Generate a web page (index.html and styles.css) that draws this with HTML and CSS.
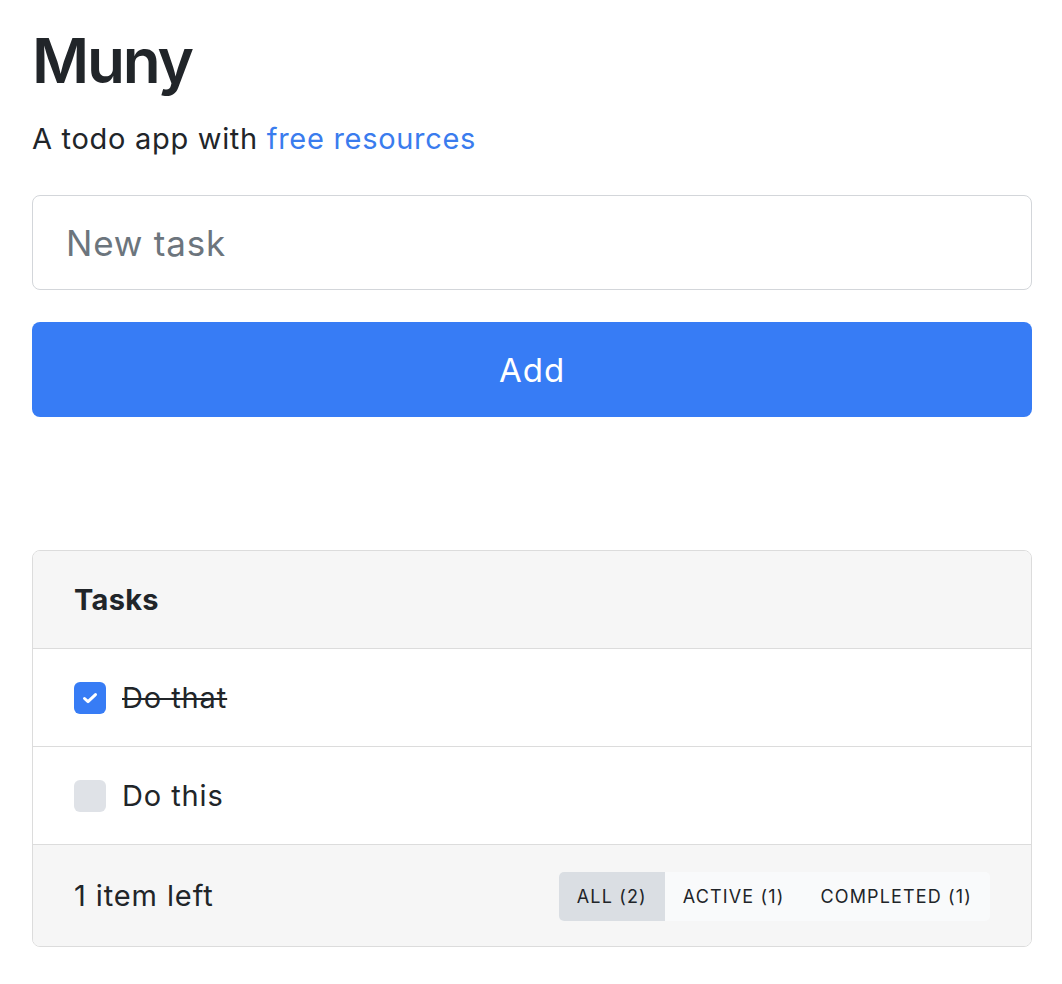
FILE: index.html
```html
<!DOCTYPE html>
<html lang="en">
<head>
<meta charset="utf-8">
<title>Muny</title>
<link rel="stylesheet" href="styles.css">
</head>
<body>
<main class="app">
  <h1 class="title">Muny</h1>
  <p class="subtitle">A todo app with <a class="link" href="#">free resources</a></p>
  <form class="new-task">
    <input class="task-input" type="text" placeholder="New task">
    <button class="add-btn" type="button">Add</button>
  </form>
  <section class="card">
    <header class="card-header">Tasks</header>
    <ul class="task-list">
      <li class="task-row">
        <span class="check checked">
          <svg viewBox="0 0 20 20" width="20" height="20"><path d="M4.5 10.5 8 13.6 15.5 6.6" fill="none" stroke="#fff" stroke-width="3" stroke-linecap="round" stroke-linejoin="round"/></svg>
        </span>
        <span class="task-text done">Do that</span>
      </li>
      <li class="task-row">
        <span class="check"></span>
        <span class="task-text">Do this</span>
      </li>
    </ul>
    <footer class="card-footer">
      <span class="count">1 item left</span>
      <div class="filters">
        <button class="filter active" type="button">All (2)</button>
        <button class="filter" type="button">Active (1)</button>
        <button class="filter" type="button">Completed (1)</button>
      </div>
    </footer>
  </section>
</main>
</body>
</html>
```

FILE: styles.css
```css
* { box-sizing: border-box; }
html, body { margin: 0; padding: 0; background: #fff; }
body {
  font-family: Inter, "Noto Sans", "Liberation Sans", sans-serif;
  color: #212529;
}
.app {
  padding: 0 30px 40px 32px;
}
.title {
  margin: 21px 0 0 0;
  font-size: 62px;
  line-height: 80px;
  font-weight: 600;
  letter-spacing: -2.2px;
}
.subtitle {
  margin: 17px 0 0 0;
  font-size: 29px;
  line-height: 42px;
  letter-spacing: 0.7px;
}
.link {
  color: #3a7cee;
  text-decoration: none;
}
.new-task {
  margin-top: 35px;
  display: flex;
  flex-direction: column;
  gap: 32px;
}
.task-input {
  display: block;
  width: 100%;
  height: 95px;
  border: 1.5px solid #d3d6da;
  border-radius: 8px;
  padding: 0 33px;
  font-family: inherit;
  font-size: 35px;
  letter-spacing: 0.8px;
  color: #212529;
  background: #fff;
  outline: none;
}
.task-input::placeholder { color: #6c757d; }
.add-btn {
  display: block;
  width: 100%;
  height: 95px;
  border: none;
  border-radius: 8px;
  background: #377cf5;
  color: #fff;
  font-family: inherit;
  font-size: 33px;
  letter-spacing: 1px;
  cursor: pointer;
}
.card {
  margin-top: 133px;
  border: 1.5px solid #dcdcdc;
  border-radius: 8px;
  overflow: hidden;
}
.card-header {
  height: 98px;
  display: flex;
  align-items: center;
  padding: 0 41px;
  background: #f6f6f6;
  border-bottom: 1.5px solid #dcdcdc;
  font-size: 29px;
  font-weight: 700;
  letter-spacing: 0.3px;
}
.task-list {
  list-style: none;
  margin: 0;
  padding: 0;
}
.task-row {
  height: 98px;
  display: flex;
  align-items: center;
  gap: 16px;
  padding: 0 41px;
  border-bottom: 1.5px solid #dcdcdc;
  font-size: 29px;
  letter-spacing: 0.9px;
}
.check {
  width: 32px;
  height: 32px;
  border-radius: 6px;
  background: #dfe2e7;
  display: flex;
  align-items: center;
  justify-content: center;
  flex: none;
}
.check.checked { background: #377cf5; }
.task-text.done { text-decoration: line-through; text-decoration-thickness: 2px; }
.card-footer {
  height: 101px;
  display: flex;
  align-items: center;
  justify-content: space-between;
  padding: 0 41px;
  background: #f6f6f6;
  font-size: 29px;
  letter-spacing: 0.9px;
}
.filters {
  display: flex;
  background: #f9fafb;
  border-radius: 5px;
  overflow: hidden;
  margin-top: 2px;
}
.filter {
  height: 49px;
  padding: 0 18px;
  border: none;
  background: transparent;
  font-family: inherit;
  font-size: 18px;
  letter-spacing: 1.15px;
  text-transform: uppercase;
  color: #212529;
}
.filter.active { background: #dadee3; }
```
